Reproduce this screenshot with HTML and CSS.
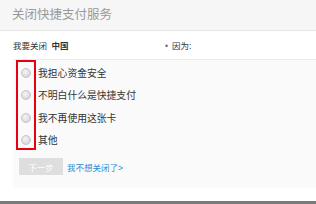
FILE: index.html
```html
<!DOCTYPE html>
<html lang="zh-CN">
<head>
    <meta charset="UTF-8">
    <title>关闭快捷支付服务</title>
    <link rel="stylesheet" href="styles.css">
</head>
<body>
    <div class="header">关闭快捷支付服务</div>
    <div class="close-row">
        <div class="close-bank">我要关闭 <b>中国</b></div>
        <div class="close-reason"><span class="dot">•</span>因为:</div>
    </div>
    <div class="panel">
        <div class="reasons">
            <label class="reason"><span class="radio"></span>我担心资金安全</label>
            <label class="reason"><span class="radio"></span>不明白什么是快捷支付</label>
            <label class="reason"><span class="radio"></span>我不再使用这张卡</label>
            <label class="reason"><span class="radio"></span>其他</label>
            <div class="mark"></div>
        </div>
        <div class="actions">
            <button class="next-btn" disabled>下一步</button>
            <a class="cancel-link" href="#">我不想关闭了&gt;</a>
        </div>
    </div>
    <div class="bottom-bar"></div>
</body>
</html>
```

FILE: styles.css
```css
body {
    margin: 0;
    width: 316px;
    height: 204px;
    overflow: hidden;
    background: #fff;
    font-family: "Liberation Sans", "Noto Sans CJK SC", sans-serif;
    position: relative;
}
.header {
    height: 30px;
    line-height: 30px;
    padding-left: 12px;
    background-color: #f6f6f6;
    border-bottom: 1px solid #e6e6e6;
    font-size: 12.5px;
    color: #999;
}
.close-row {
    display: flex;
    align-items: center;
    height: 28px;
    padding-left: 13px;
    font-size: 8.5px;
    color: #333;
}
.close-bank {
    width: 152px;
}
.close-bank b {
    margin-left: 2px;
}
.close-reason .dot {
    margin-right: 4px;
    color: #666;
}
.panel {
    margin-left: 13px;
    height: 127px;
    background-color: #fafafa;
    border-top: 1px solid #ececec;
    padding-top: 1px;
}
.reasons {
    position: relative;
    padding-top: 1px;
}
.reason {
    display: flex;
    align-items: center;
    height: 22.3px;
    font-size: 9.8px;
    color: #333;
}
.radio {
    width: 8px;
    height: 8px;
    margin-left: 8px;
    margin-right: 7px;
    border-radius: 50%;
    border: 1px solid #c4c4c4;
    background: radial-gradient(circle at 40% 35%, #f4f4f4, #cfcfcf);
}
.mark {
    position: absolute;
    left: 3px;
    top: -1px;
    width: 16px;
    height: 86px;
    border: 2px solid #e60012;
}
.actions {
    display: flex;
    align-items: center;
    margin-top: 7px;
    padding-left: 6px;
}
.next-btn {
    width: 44px;
    height: 17px;
    padding: 0;
    border: none;
    background-color: #dedede;
    color: #fff;
    font-family: inherit;
    font-size: 8.5px;
}
.cancel-link {
    margin-left: 4px;
    font-size: 8.5px;
    color: #2a8ad4;
    text-decoration: none;
}
.bottom-bar {
    position: absolute;
    left: 0;
    bottom: 0;
    width: 100%;
    height: 3px;
    background-color: #7a7a7a;
}
```
